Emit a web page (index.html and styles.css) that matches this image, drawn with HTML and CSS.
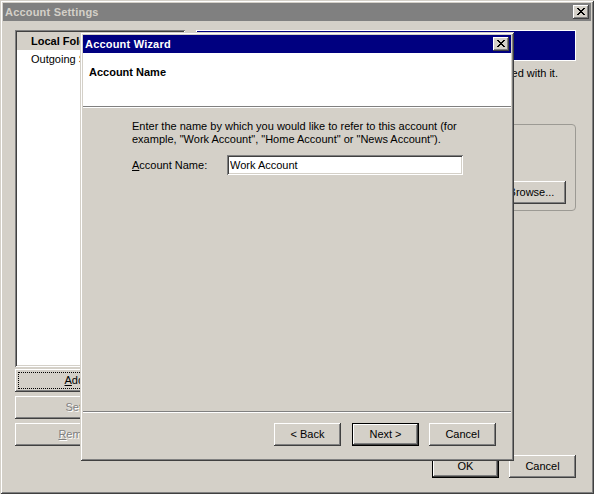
FILE: index.html
```html
<!DOCTYPE html>
<html>
<head>
<meta charset="utf-8">
<title>Account Settings</title>
<link rel="stylesheet" href="styles.css">
</head>
<body>
<div class="win main">
  <div class="titlebar inactive">
    <span class="title">Account Settings</span>
    <button class="cap-btn" aria-label="Close"><svg width="8" height="7" viewBox="0 0 8 7"><path d="M0 0h2v1H0zM6 0h2v1H6zM1 1h2v1H1zM5 1h2v1H5zM2 2h4v1H2zM3 3h2v1H3zM2 4h4v1H2zM1 5h2v1H1zM5 5h2v1H5zM0 6h2v1H0zM6 6h2v1H6z" fill="#000"/></svg></button>
  </div>
  <div class="main-body">
    <div class="main-top">
      <div class="left-col">
        <div class="list">
          <div class="row sel">Local Folders</div>
          <div class="row">Outgoing Server (SMTP)</div>
        </div>
        <div class="left-btns">
          <button class="btn focus"><u>A</u>dd Account...</button>
          <button class="btn disabled">Set as Default</button>
          <button class="btn disabled"><u>R</u>emove Account</button>
        </div>
      </div>
      <div class="right-col">
        <div class="banner">Local Folders</div>
        <p class="desc">Settings for Local Folders and the messages associated with it.</p>
        <div class="group">
          <div class="group-label">Local directory:</div>
          <div class="group-row">
            <div class="field"></div>
            <button class="btn browse">Browse...</button>
          </div>
        </div>
      </div>
    </div>
    <div class="main-footer">
      <button class="btn default">OK</button>
      <button class="btn">Cancel</button>
    </div>
  </div>
</div>

<div class="win wizard">
  <div class="titlebar active">
    <span class="title">Account Wizard</span>
    <button class="cap-btn" aria-label="Close"><svg width="8" height="7" viewBox="0 0 8 7"><path d="M0 0h2v1H0zM6 0h2v1H6zM1 1h2v1H1zM5 1h2v1H5zM2 2h4v1H2zM3 3h2v1H3zM2 4h4v1H2zM1 5h2v1H1zM5 5h2v1H5zM0 6h2v1H0zM6 6h2v1H6z" fill="#000"/></svg></button>
  </div>
  <div class="wiz-header">Account Name</div>
  <div class="sep"></div>
  <div class="wiz-content">
    <p class="intro">Enter the name by which you would like to refer to this account (for<br>example, "Work Account", "Home Account" or "News Account").</p>
    <div class="field-row">
      <label class="field-label" for="acct"><u>A</u>ccount Name:</label>
      <input class="edit" id="acct" type="text" value="Work Account">
    </div>
  </div>
  <div class="sep"></div>
  <div class="wiz-footer">
    <button class="btn">&lt; Back</button>
    <button class="btn default">Next &gt;</button>
    <button class="btn">Cancel</button>
  </div>
</div>
</body>
</html>
```

FILE: styles.css
```css
* { box-sizing: border-box; }

html, body { margin: 0; padding: 0; }

body {
  width: 594px;
  height: 494px;
  position: relative;
  overflow: hidden;
  background: #d4d0c8;
  color: #000;
  font-family: "Liberation Sans", Arial, sans-serif;
  font-size: 11px;
}

.win {
  background: #d4d0c8;
  padding: 3px;
  display: flex;
  flex-direction: column;
  box-shadow: inset 1px 1px #d4d0c8, inset -1px -1px #404040, inset 2px 2px #fff, inset -2px -2px #808080;
}

.main { width: 594px; height: 494px; }

.titlebar {
  flex: none;
  height: 18px;
  display: flex;
  align-items: center;
  padding: 0 2px;
}
.titlebar.inactive { background: #808080; color: #d4d0c8; }
.titlebar.active { background: #000080; color: #fff; }

.title {
  flex: 1;
  font-weight: bold;
  line-height: 13px;
  white-space: nowrap;
  letter-spacing: 0.2px;
}

button {
  font: inherit;
  color: inherit;
  margin: 0;
  border: 0;
  padding: 0;
  background: #d4d0c8;
}

.cap-btn {
  flex: none;
  width: 16px;
  height: 14px;
  display: flex;
  align-items: center;
  justify-content: center;
  padding: 0 1px 1px 0;
  box-shadow: inset -1px -1px #404040, inset 1px 1px #fff, inset -2px -2px #808080;
}
.cap-btn svg { display: block; }

.btn {
  flex: none;
  height: 23px;
  width: 67px;
  color: #000;
  line-height: 13px;
  text-align: center;
  white-space: nowrap;
  overflow: hidden;
  box-shadow: inset -1px -1px #404040, inset 1px 1px #fff, inset -2px -2px #808080;
}
.btn.default {
  box-shadow: inset 0 0 0 1px #000, inset -2px -2px #404040, inset 2px 2px #fff, inset -3px -3px #808080;
}
.btn.focus {
  outline: 1px dotted #000;
  outline-offset: -4px;
}
.btn.disabled {
  color: #808080;
  text-shadow: 1px 1px #fff;
}

/* main window body */
.main-body {
  flex: 1;
  display: flex;
  flex-direction: column;
  padding: 9px 15px 0 12px;
}

.main-top { display: flex; gap: 11px; }

.left-col {
  flex: none;
  width: 170px;
  display: flex;
  flex-direction: column;
  gap: 2px;
}

.list {
  height: 337px;
  background: #fff;
  padding: 2px;
  box-shadow: inset 1px 1px #808080, inset -1px -1px #fff, inset 2px 2px #404040, inset -2px -2px #d4d0c8;
}

.row {
  height: 18px;
  line-height: 18px;
  padding-left: 14px;
  white-space: nowrap;
  overflow: hidden;
}
.row.sel { background: #d4d0c8; font-weight: bold; }

.left-btns {
  display: flex;
  flex-direction: column;
  gap: 4px;
}
.left-btns .btn { width: 100%; }

.right-col {
  flex: 1;
  min-width: 0;
  display: flex;
  flex-direction: column;
}

.banner {
  height: 31px;
  background: #000080;
  border: 1px solid #fff;
  color: #fff;
  font-weight: bold;
  line-height: 29px;
  padding-left: 6px;
}

.desc {
  margin: 6px 0 0;
  line-height: 13px;
  white-space: nowrap;
  text-align: right;
  padding-right: 18px;
}

.group {
  margin-top: 44px;
  height: 87px;
  border: 1px solid #9c9a94;
  border-radius: 4px;
  padding: 14px 9px 0 8px;
}

.group-label { line-height: 13px; }

.group-row {
  display: flex;
  gap: 8px;
  margin-top: 29px;
}

.field {
  flex: 1;
  height: 20px;
  background: #fff;
}

.btn.browse { width: 69px; }

.main-footer {
  display: flex;
  justify-content: flex-end;
  gap: 10px;
  margin-top: 9px;
}

/* wizard */
.wizard {
  position: absolute;
  left: 80px;
  top: 32px;
  width: 434px;
  height: 429px;
}

.wiz-header {
  flex: none;
  height: 53px;
  background: #fff;
  font-weight: bold;
  line-height: 13px;
  padding: 13px 0 0 6px;
}

.sep {
  flex: none;
  height: 2px;
  border-top: 1px solid #808080;
  border-bottom: 1px solid #fff;
}

.wiz-content {
  flex: 1;
  padding: 12px 0 0 49px;
}

.intro {
  margin: 0;
  line-height: 13px;
  white-space: nowrap;
}

.field-row {
  display: flex;
  align-items: center;
  margin-top: 9px;
}

.field-label {
  width: 95px;
  line-height: 13px;
}

.edit {
  width: 236px;
  height: 20px;
  margin: 0;
  border: 0;
  outline: none;
  padding: 0 3px;
  font: inherit;
  color: #000;
  background: #fff;
  box-shadow: inset 1px 1px #808080, inset -1px -1px #fff, inset 2px 2px #404040, inset -2px -2px #d4d0c8;
}

.wiz-footer {
  flex: none;
  display: flex;
  justify-content: flex-end;
  gap: 10px;
  padding: 10px 15px 12px 0;
}
.wiz-footer .btn:first-child { margin-right: 1px; }
```
